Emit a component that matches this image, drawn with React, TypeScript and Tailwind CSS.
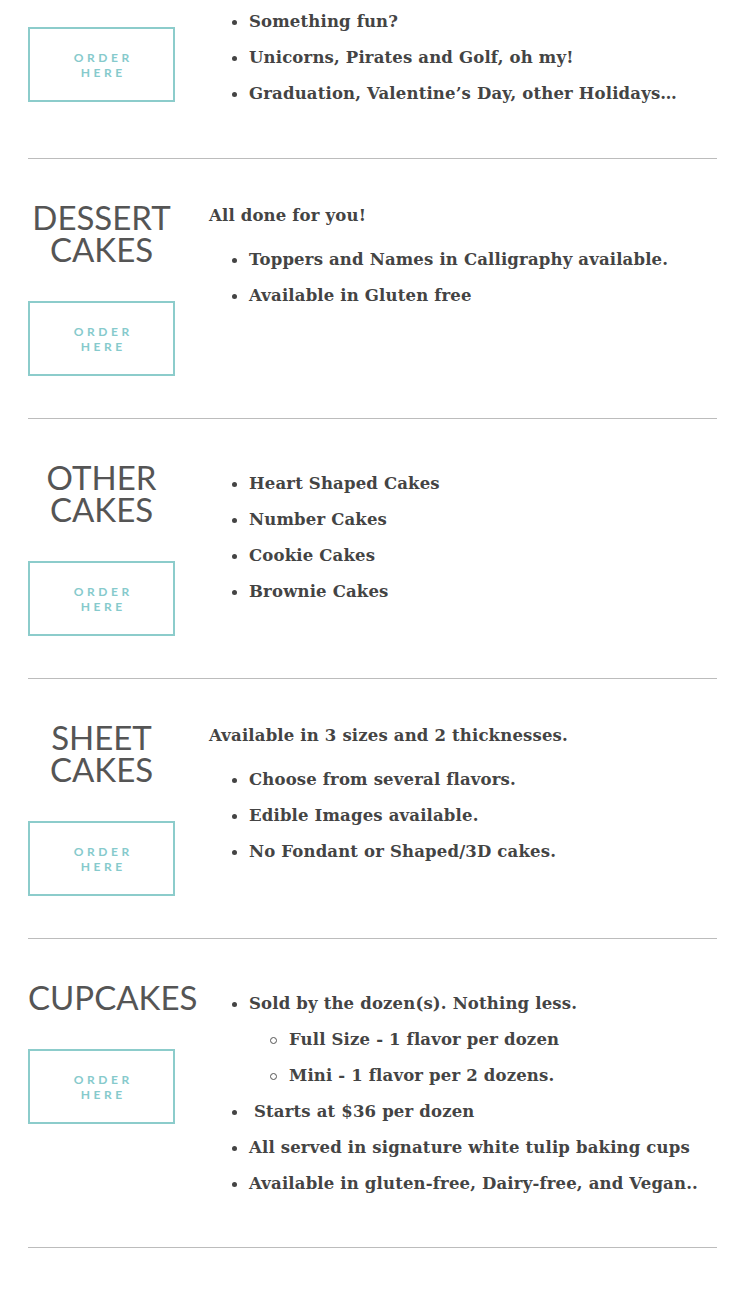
import React from "react";

type Item = { text: string; sub?: string[]; pre?: boolean };
type Section = { title: string[]; intro?: string; items: Item[] };

const first: Item[] = [
  { text: "Something fun?" },
  { text: "Unicorns, Pirates and Golf, oh my!" },
  { text: "Graduation, Valentine’s Day, other Holidays…" },
];

const sections: Section[] = [
  {
    title: ["DESSERT", "CAKES"],
    intro: "All done for you!",
    items: [
      { text: "Toppers and Names in Calligraphy available." },
      { text: "Available in Gluten free" },
    ],
  },
  {
    title: ["OTHER", "CAKES"],
    items: [
      { text: "Heart Shaped Cakes" },
      { text: "Number Cakes" },
      { text: "Cookie Cakes" },
      { text: "Brownie Cakes" },
    ],
  },
  {
    title: ["SHEET", "CAKES"],
    intro: "Available in 3 sizes and 2 thicknesses.",
    items: [
      { text: "Choose from several flavors." },
      { text: "Edible Images available." },
      { text: "No Fondant or Shaped/3D cakes." },
    ],
  },
  {
    title: ["CUPCAKES"],
    items: [
      {
        text: "Sold by the dozen(s). Nothing less.",
        sub: ["Full Size - 1 flavor per dozen", "Mini - 1 flavor per 2 dozens."],
      },
      { text: "Starts at $36 per dozen", pre: true },
      { text: "All served in signature white tulip baking cups" },
      { text: "Available in gluten-free, Dairy-free, and Vegan.." },
    ],
  },
];

function Bullet({ circle }: { circle?: boolean }) {
  return circle ? (
    <span className="inline-block h-[7px] w-[7px] rounded-full border border-[#555]" />
  ) : (
    <span className="inline-block h-[5px] w-[5px] rounded-full bg-[#444]" />
  );
}

function OrderButton({ className }: { className: string }) {
  return (
    <div
      className={`${className} flex h-[75px] w-[147px] flex-col items-center justify-center border-2 border-[#8ccccb] font-['Lato','Open_Sans',sans-serif] text-[12px] leading-[15px] font-bold tracking-[0.3em] text-[#86cacc]`}
    >
      <span className="pl-[0.3em]">ORDER</span>
      <span className="pl-[0.3em]">HERE</span>
    </div>
  );
}

function List({ items }: { items: Item[] }) {
  return (
    <ul className="py-[3px]">
      {items.map((it, k) => (
        <li key={k}>
          <div className="flex h-[36px] items-center">
            <div className="flex w-[40px] shrink-0 justify-end pr-[12px]">
              <Bullet />
            </div>
            <span className={`whitespace-nowrap ${it.pre ? "pl-[5px]" : ""}`}>{it.text}</span>
          </div>
          {it.sub &&
            it.sub.map((st, m) => (
              <div key={m} className="flex h-[36px] items-center">
                <div className="flex w-[80px] shrink-0 justify-end pr-[12px]">
                  <Bullet circle />
                </div>
                <span className="whitespace-nowrap">{st}</span>
              </div>
            ))}
        </li>
      ))}
    </ul>
  );
}

const bodyText =
  "font-['DejaVu_Serif','Liberation_Serif',serif] text-[16.5px] tracking-[0.01em] font-bold text-[#444444]";

export default function App() {
  return (
    <div className="min-h-[1294px] w-[745px] overflow-hidden bg-white">
      <div className="px-[28px]">
        <div className="border-b border-[#bcbcbc]">
          <div className="flex pb-[43px] pt-[1px]">
            <div className="w-[181px] shrink-0">
              <OrderButton className="mt-[26px]" />
            </div>
            <div className={`flex-1 ${bodyText}`}>
              <List items={first} />
            </div>
          </div>
        </div>
        {sections.map((s, i) => (
          <div key={i} className="border-b border-[#bcbcbc]">
            <div className="flex pt-[44px] pb-[42px]">
              <div className="w-[181px] shrink-0">
                <div className="mt-[-2px] w-[147px] text-center font-['Lato','Open_Sans',sans-serif] text-[33px] leading-[32px] font-normal text-[#555555]">
                  {s.title.map((t, j) => (
                    <div key={j} className="whitespace-nowrap">
                      {t}
                    </div>
                  ))}
                </div>
                <OrderButton className="mt-[36px]" />
              </div>
              <div className={`flex-1 ${bodyText}`}>
                {s.intro && <p className="leading-[26px] mb-[10px]">{s.intro}</p>}
                <List items={s.items} />
              </div>
            </div>
          </div>
        ))}
      </div>
    </div>
  );
}
